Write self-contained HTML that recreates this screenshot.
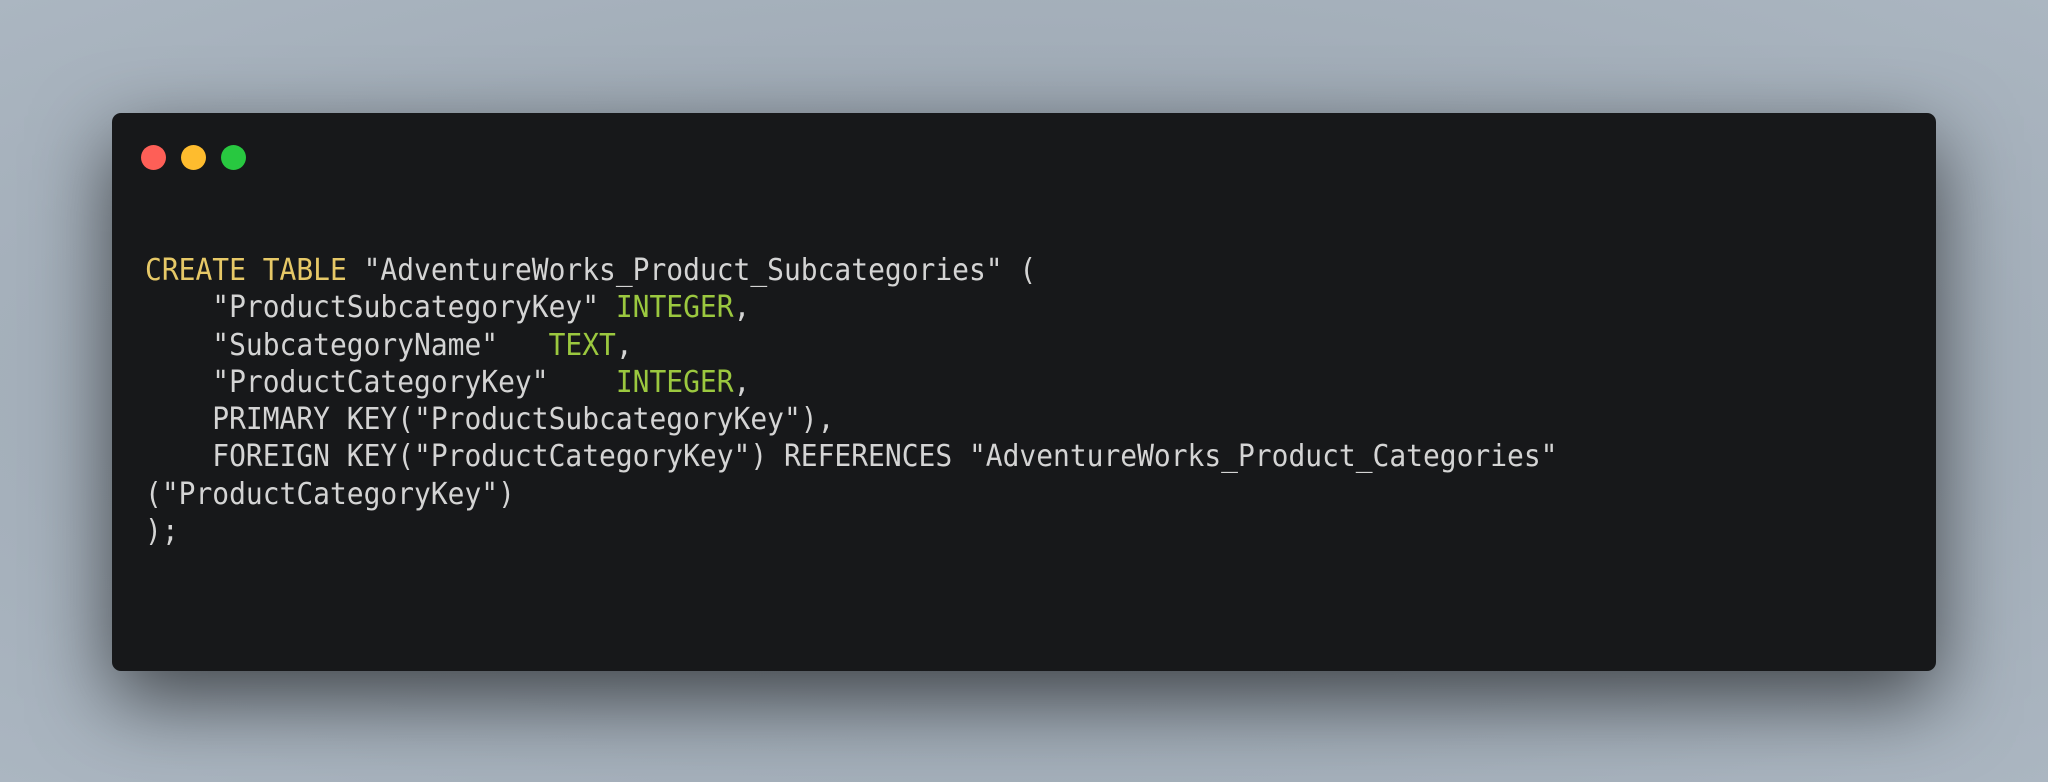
<!DOCTYPE html>
<html><head><meta charset="utf-8"><style>
html,body{margin:0;padding:0;width:2048px;height:782px;overflow:hidden;}
body{background:radial-gradient(ellipse at 50% 50%, #8e99a5 0%, #a2adb8 60%, #abb6c1 100%);position:relative;}
.win{position:absolute;left:112px;top:113px;width:1824px;height:558px;background:#17181a;border-radius:9px;box-shadow:0 28px 80px rgba(0,0,0,0.6);}
.dot{position:absolute;top:145px;width:25px;height:25px;border-radius:50%;}
pre{position:absolute;left:145px;top:252px;margin:0;font-family:"DejaVu Sans Mono","Liberation Mono",monospace;font-size:30px;line-height:37.3px;color:#d4d4d4;transform:scaleX(0.931);transform-origin:0 0;}
.k{color:#e6c867}.t{color:#9bc83f}
</style></head><body>
<div class="win"></div>
<div class="dot" style="left:141px;background:#fe5f57"></div>
<div class="dot" style="left:181px;background:#febc2e"></div>
<div class="dot" style="left:221px;background:#28c840"></div>
<pre><span class="k">CREATE TABLE</span> "AdventureWorks_Product_Subcategories" (
    "ProductSubcategoryKey" <span class="t">INTEGER</span>,
    "SubcategoryName"   <span class="t">TEXT</span>,
    "ProductCategoryKey"    <span class="t">INTEGER</span>,
    PRIMARY KEY("ProductSubcategoryKey"),
    FOREIGN KEY("ProductCategoryKey") REFERENCES "AdventureWorks_Product_Categories"
("ProductCategoryKey")
);</pre>
</body></html>
